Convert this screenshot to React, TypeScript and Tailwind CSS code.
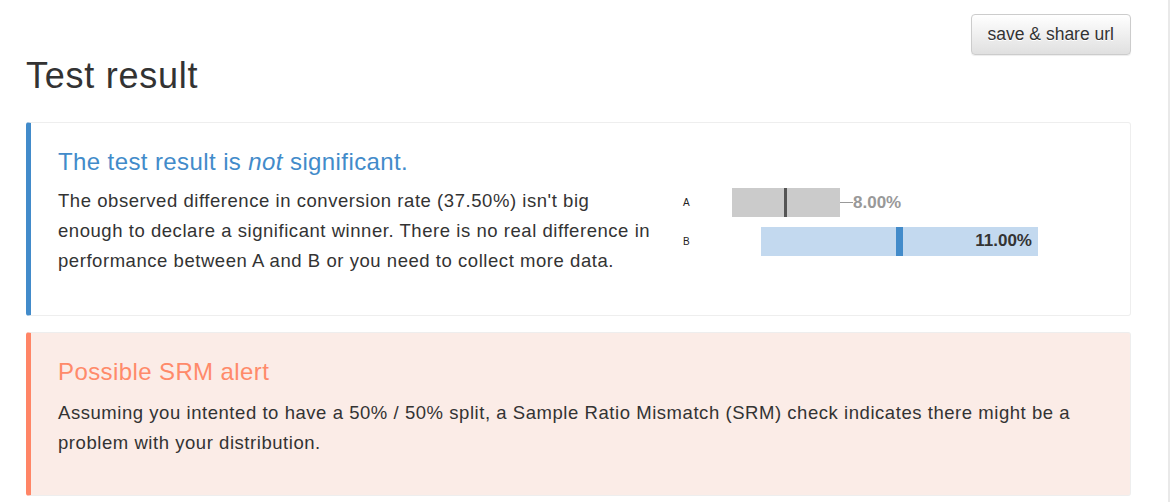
import React from 'react';

export default function App() {
  return (
    <div className="w-[1170px] h-[502px] overflow-hidden bg-white border-r-2 border-[#e9e9e9] font-['Liberation_Sans',Arial,sans-serif] text-[#333]">
      <div className="pl-[26px] pr-[37px]">
        {/* Top actions */}
        <div className="flex justify-end pt-[14px]">
          <button className="h-[41px] px-[16px] rounded-[4px] border border-[#ccc] bg-gradient-to-b from-white to-[#e0e0e0] text-[17.5px] text-[#333] shadow-[0_1px_1px_rgba(0,0,0,0.075)] [text-shadow:0_1px_0_#fff]">
            save &amp; share url
          </button>
        </div>

        <h1 className="mt-px text-[36px] leading-[1.1] font-normal tracking-[0.75px]">Test result</h1>

        {/* Significance callout */}
        <div className="mt-[26px] rounded-[3px] border border-[#eee] border-l-[5px] border-l-[#428bca] pl-[27px] pt-[26px] pb-[39px]">
          <div className="flex">
            <div className="w-[600px] shrink-0">
              <h3 className="text-[24px] leading-[1.1] tracking-[0.4px] text-[#428bca]">
                The test result is <em>not</em> significant.
              </h3>
              <p className="mt-[11px] text-[18.5px] leading-[30px] tracking-[0.55px]">
                The observed difference in conversion rate (37.50%) isn't big enough to declare a significant winner. There is no real difference in performance between A and B or you need to collect more data.
              </p>
            </div>

            {/* Interval chart */}
            <div className="ml-[25px] mt-[39px] flex flex-col gap-[10px]">
              <div className="flex h-[29px] items-center">
                <span className="w-[49px] text-[10px] text-[#222]">A</span>
                <div className="relative h-[29px] w-[320px]">
                  <div className="absolute left-0 top-0 h-[29px] w-[108px] bg-[#cbcbcb]">
                    <div className="absolute left-[52px] top-0 h-full w-[3px] bg-[#555]" />
                  </div>
                  <div className="absolute left-[108px] top-[14px] h-px w-[13px] bg-[#999]" />
                  <span className="absolute left-[121px] top-[2px] text-[17px] font-bold text-[#999]">8.00%</span>
                </div>
              </div>
              <div className="flex h-[29px] items-center">
                <span className="w-[49px] text-[10px] text-[#222]">B</span>
                <div className="relative h-[29px] w-[320px]">
                  <div className="absolute left-[29px] top-0 flex h-[29px] w-[277px] items-center justify-end bg-[#c3d9ef] pr-[6px]">
                    <div className="absolute left-[135px] top-0 h-full w-[7px] bg-[#428bca]" />
                    <span className="text-[17px] font-bold text-[#333]">11.00%</span>
                  </div>
                </div>
              </div>
            </div>
          </div>
        </div>

        {/* SRM callout */}
        <div className="mt-[16px] rounded-[3px] border border-[#eee] border-l-[5px] border-l-[#ff8566] bg-[#fbece7] pl-[27px] pr-[40px] pt-[26px] pb-[37px]">
          <h3 className="text-[24px] leading-[1.1] tracking-[0.4px] text-[#ff8a6a]">Possible SRM alert</h3>
          <p className="mt-[13px] text-[18.5px] leading-[30px] tracking-[0.55px]">
            Assuming you intented to have a 50% / 50% split, a Sample Ratio Mismatch (SRM) check indicates there might be a problem with your distribution.
          </p>
        </div>
      </div>
    </div>
  );
}
